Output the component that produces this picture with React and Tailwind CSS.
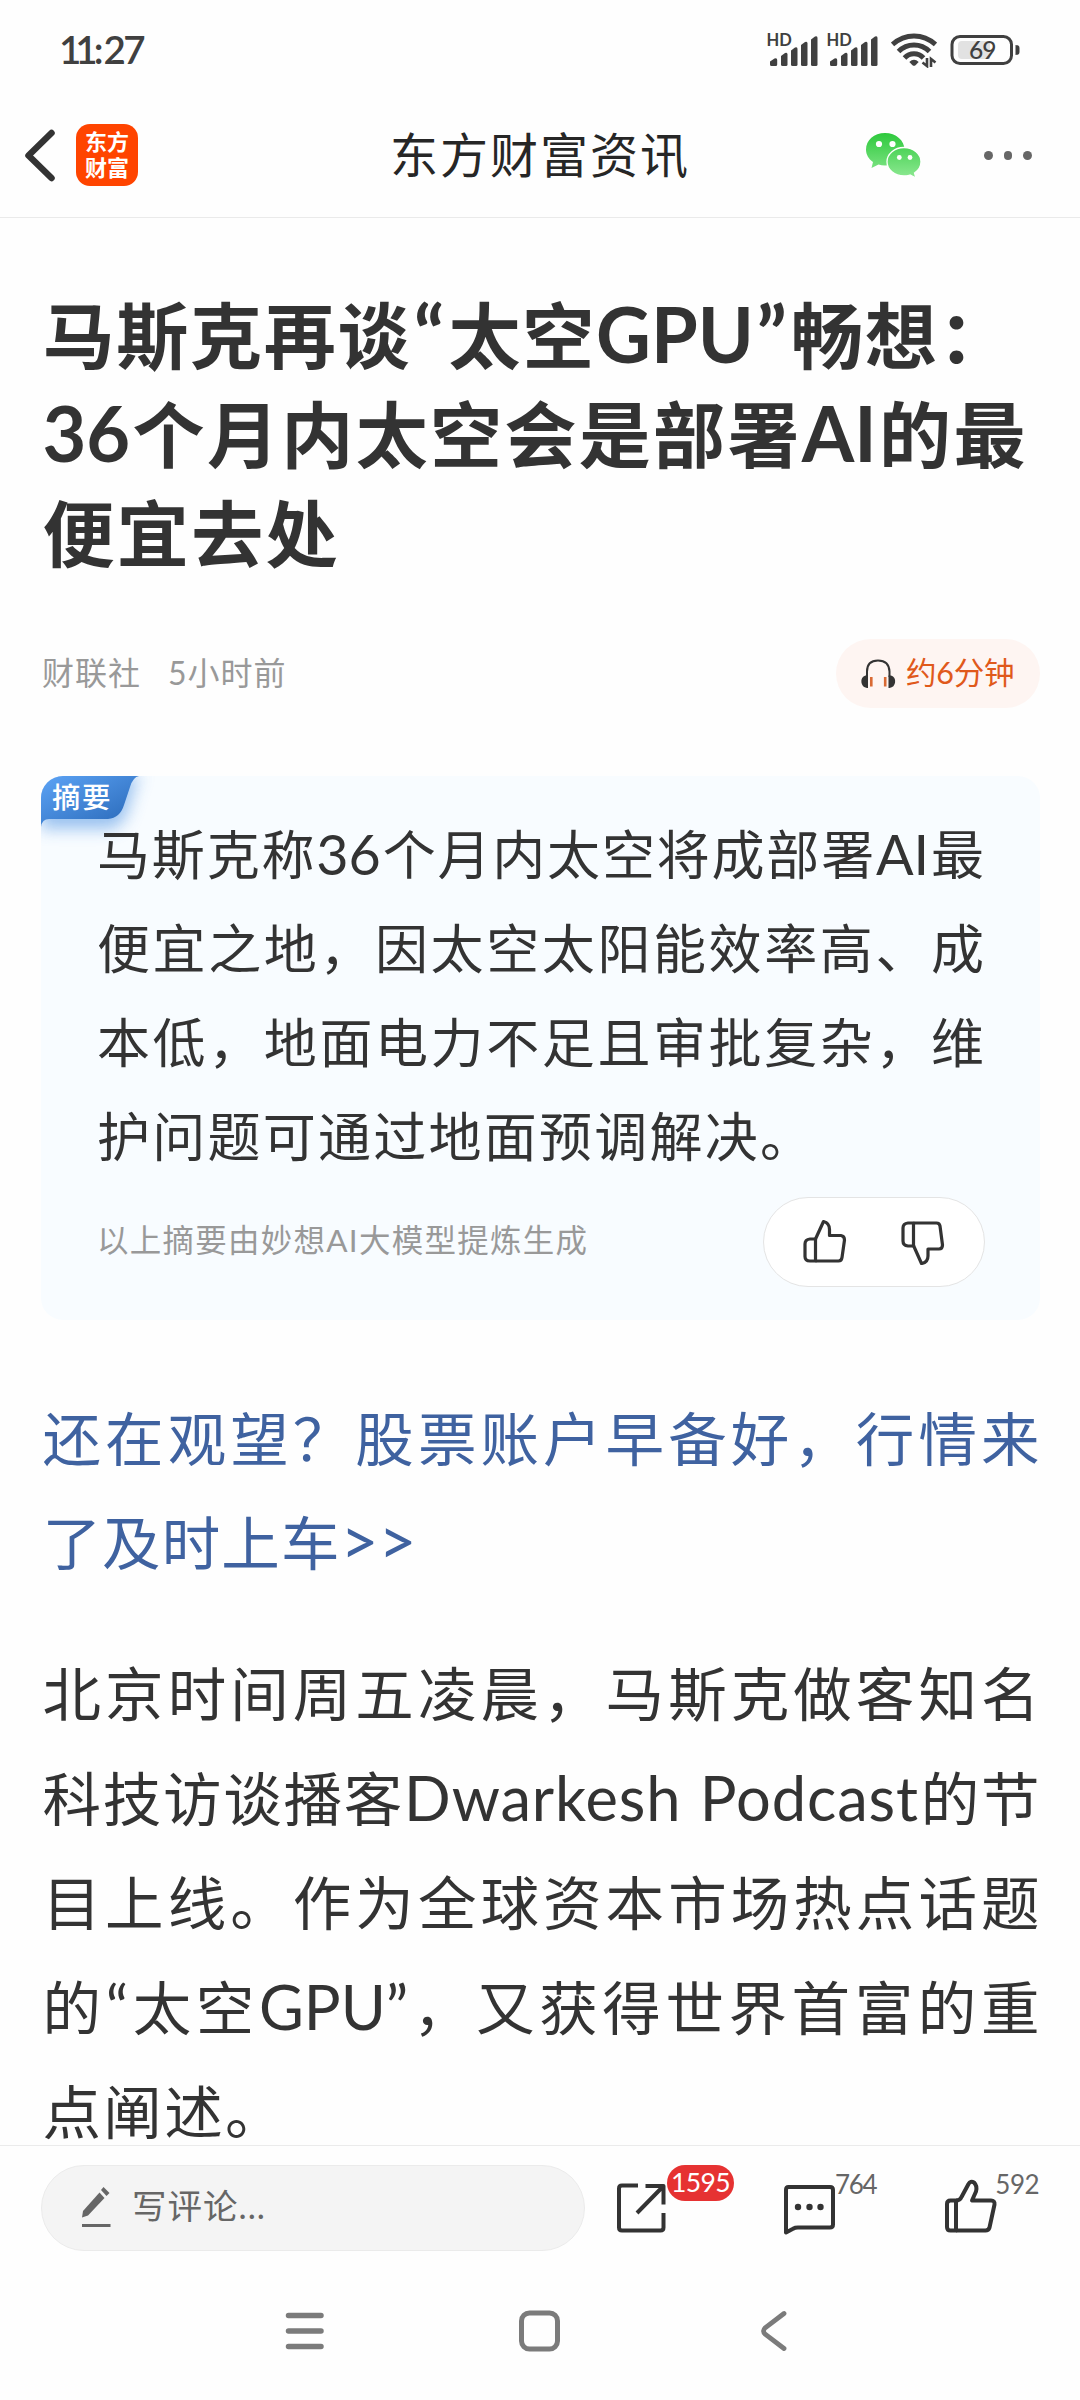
import clsx from "clsx";

const titleLines = [
  { parts: ["马斯克再谈", { quote: "“" }, "太空", { latin: "GPU" }, { quote: "”" }, "畅想："], width: "w-[968px]" },
  { parts: [{ latin: "36" }, "个月内太空会是部署", { latin: "AI" }, "的最"], width: "w-[983px]" },
  { parts: ["便宜去处"], width: "w-[295px]" },
];

const summaryLines = [
  { parts: ["马斯克称", { latin: "36" }, "个月内太空将成部署", { latin: "AI" }, "最"], width: "w-[887px]" },
  { parts: ["便宜之地，因太空太阳能效率高、成"], width: "w-[887px]" },
  { parts: ["本低，地面电力不足且审批复杂，维"], width: "w-[887px]" },
  { parts: ["护问题可通过地面预调解决。"], width: "w-[716px]" },
];

const adLines = [
  { parts: ["还在观望？股票账户早备好，行情来"], width: "w-[997px]" },
  { parts: ["了及时上车", { arrows: ">>" }], width: "w-[374px]" },
];

const bodyLines = [
  { parts: ["北京时间周五凌晨，马斯克做客知名"], width: "w-[997px]" },
  { parts: ["科技访谈播客", { wide: "Dwarkesh Podcast" }, "的节"], width: "w-[997px]" },
  { parts: ["目上线。作为全球资本市场热点话题"], width: "w-[997px]" },
  { parts: ["的", { latin: "“" }, "太空", { latin: "GPU" }, { latin: "”" }, "，又获得世界首富的重"], width: "w-[997px]" },
  { parts: ["点阐述。"], width: "w-[241px]" },
];

function Part({ part }) {
  if (part.latin) return <span className="text-[1.05em] leading-none">{part.latin}</span>;
  if (part.quote) return <span className="px-[0.03em] text-[1.1em] leading-none">{part.quote}</span>;
  if (part.wide) return <span className="text-[1.05em] leading-none tracking-[0.900px]">{part.wide}</span>;
  if (part.arrows) return <span className="text-[1.12em] leading-none">{part.arrows}</span>;
  return part;
}

function Lines({ lines, className }) {
  return lines.map((line, i) => (
    <div key={i} className={clsx("whitespace-nowrap text-justify [text-align-last:justify]", line.width, className)}>
      {line.parts.map((part, j) => (
        <Part key={j} part={part} />
      ))}
    </div>
  ));
}

function Signal() {
  return (
    <div className="relative h-[34px] w-[50px]">
      <svg width="50" height="34" viewBox="0 0 50 34" fill="#404040">
        <path d="M2 33V28.500L6.500 25.500Q9.200 24.500 9.200 27V31.500Q9.200 33 7.700 33H3.500Q2 33 2 31.500Z" />
        <path d="M13 23L17 20Q19.500 18.800 19.500 21.500V31.500Q19.500 33 18 33H14.500Q13 33 13 31.500Z" />
        <path d="M23 17.500L27 14.500Q29.500 13.300 29.500 16V31.500Q29.500 33 28 33H24.500Q23 33 23 31.500Z" />
        <path d="M33 12L37 9Q39.500 7.800 39.500 10.500V31.500Q39.500 33 38 33H34.500Q33 33 33 31.500Z" />
        <path d="M43 6.500L47 3.500Q49.500 2.300 49.500 5V31.500Q49.500 33 48 33H44.500Q43 33 43 31.500Z" />
      </svg>
      <span className="absolute -top-[3px] -left-[1.500px] text-[16.500px] leading-5 font-bold text-[#404040]">HD</span>
    </div>
  );
}

function Wifi() {
  return (
    <svg width="46" height="36" viewBox="0 0 46 36" fill="none" stroke="#404040" strokeWidth="5">
      <path d="M1.500 12.500Q11 4 23 4T44.500 12.500" />
      <path d="M7.500 19.500Q14 13 23 13T38.500 19.500" />
      <path d="M13.500 26Q17.500 21.800 23 21.800T32.500 26" />
      <path d="M18.300 30Q23 25.500 27.700 30L24.500 33.300Q23 34.300 21.500 33.300Z" fill="#404040" stroke="none" />
      <path d="M36 26V34L31.500 30.500M40 35V27L44.500 30.500" strokeWidth="2.600" />
    </svg>
  );
}

function Battery() {
  return (
    <svg width="70" height="32" viewBox="0 0 70 32">
      <rect x="2" y="2.500" width="59.500" height="27" rx="8" fill="none" stroke="#404040" strokeWidth="3" />
      <path d="M12 7H40V25H12Q8 25 8 21V11Q8 7 12 7Z" fill="#e2e2e2" />
      <path d="M65.500 11Q69.500 11 69.500 14V18Q69.500 21 65.500 21Z" fill="#404040" />
      <text x="19" y="25" fontSize="24.500" fontWeight="500" textLength="27.500" fill="#404040" fontFamily="Lato, sans-serif">69</text>
    </svg>
  );
}

function WeChat() {
  return (
    <svg width="58" height="48" viewBox="0 0 58 48">
      <defs>
        <linearGradient id="wechat" x1="0" y1="0" x2="0" y2="48" gradientUnits="userSpaceOnUse">
          <stop offset="0" stopColor="#2bc83a" />
          <stop offset="1" stopColor="#92ea96" />
        </linearGradient>
      </defs>
      <path d="M20 1C9 1 1 8.300 1 17.500C1 22.500 3.500 27 8 30L6.500 36L13.500 32.500Q16.500 33.500 20 33.500C31 33.500 39.500 26.500 39.500 17.500S31 1 20 1Z" fill="url(#wechat)" />
      <path d="M39 15.500C29.500 15.500 22 21.800 22 29.700S29.500 44 39 44Q42 44 45 43L51 46L49.500 41C53.500 38.300 56 34.300 56 29.700C56 21.800 48.500 15.500 39 15.500Z" fill="url(#wechat)" stroke="#fff" strokeWidth="1.300" />
      <g fill="#fff">
        <circle cx="14" cy="12" r="3.100" />
        <circle cx="27.500" cy="12" r="3.100" />
        <circle cx="34.300" cy="25.500" r="2.400" />
        <circle cx="45" cy="25.500" r="2.400" />
      </g>
    </svg>
  );
}

function Headphones() {
  return (
    <svg width="36" height="30" viewBox="0 0 36 30">
      <path d="M7 18V12.500Q7 1.500 18 1.500T29.500 12.500V18" fill="none" stroke="#333" strokeWidth="2" />
      <path d="M8 29H7A6.500 6.500 0 0 1 5.500 16.500H8ZM28.500 29H29.500A6.500 6.500 0 0 0 31 16.500H28.500Z" fill="#333" />
      <path d="M11.300 18V27.500M25.200 18V27.500" stroke="#d96a34" strokeWidth="2.600" />
    </svg>
  );
}

function SmallThumb({ down }) {
  return (
    <svg width="44" height="46" viewBox="0 0 44 46" fill="none" stroke="#333" strokeWidth="3.200" strokeLinejoin="round">
      {down ? (
        <>
          <path d="M12.500 4H35.500Q38.500 4 39 7L41.500 26Q41.500 30 38 30H27V37Q27 43.500 20.500 44.500L12.500 26.500" />
          <path d="M12.500 4H7Q2 4.500 2 9V22Q2 26.500 7 27H12.500Z" />
        </>
      ) : (
        <>
          <path d="M12.500 20L20.500 2.500Q26.500 4 26.500 10.500V16.500H38Q41.500 17 41.500 21L39 38.500Q38.500 42 35.500 42H12.500" />
          <path d="M12.500 20H7Q2 20.500 2 25V37.500Q2 42 7 42H12.500Z" />
        </>
      )}
    </svg>
  );
}

function StatusBar() {
  return (
    <div className="flex h-[100px] items-center justify-between pr-[60px] pl-[59px]">
      <div className="flex text-[38.500px] font-semibold text-[#404040]">
        <span className="tracking-[-6px]">11</span>
        <span className="ml-[2px]">:</span>
        <span className="tracking-[-2.500px]">27</span>
      </div>
      <div className="flex items-center">
        <Signal />
        <div className="w-2.5" />
        <Signal />
        <div className="w-[13px]" />
        <Wifi />
        <div className="w-[13px]" />
        <Battery />
      </div>
    </div>
  );
}

function Header() {
  return (
    <header className="flex h-[118px] items-start justify-between border-b border-[#eaeaea] pt-6">
      <div className="flex h-[62px] w-[388px] items-center pl-6">
        <svg width="32" height="54" viewBox="0 0 32 54" fill="none" stroke="#333" strokeWidth="6.500" strokeLinecap="round" strokeLinejoin="round">
          <path d="M27.500 5L4.500 27.500L27.500 50" />
        </svg>
        <div className="ml-5 flex h-[62px] w-[62px] flex-col items-center justify-center rounded-[14px] bg-[#ff4400] text-[22px] leading-[26px] font-bold text-white">
          <span>东方</span>
          <span>财富</span>
        </div>
      </div>
      <h1 className="text-[48px] leading-[62px] tracking-[2px] text-[#262626]">东方财富资讯</h1>
      <div className="flex h-[62px] w-[388px] items-center justify-end pt-px pr-[48px]">
        <WeChat />
        <div className="ml-[61px] flex gap-[11px]">
          <i className="h-[8.500px] w-[8.500px] rounded-full bg-[#666]" />
          <i className="h-[8.500px] w-[8.500px] rounded-full bg-[#666]" />
          <i className="h-[8.500px] w-[8.500px] rounded-full bg-[#666]" />
        </div>
      </div>
    </header>
  );
}

function Summary() {
  return (
    <section className="relative mt-[68px] h-[544px] rounded-[22px] bg-[#f8fcff] pt-[32px] pr-[55px] pl-14">
      <div className="absolute top-0 left-0 h-[80px] w-[136px] overflow-hidden rounded-tl-[22px]">
        <svg width="136" height="80" viewBox="0 0 136 80">
          <defs>
            <linearGradient id="tag" x1="0" y1="0" x2="1" y2="1">
              <stop offset="0" stopColor="#5ca3f5" />
              <stop offset="1" stopColor="#2766b5" />
            </linearGradient>
            <filter id="tagShadow" x="-30%" y="-30%" width="170%" height="200%">
              <feGaussianBlur stdDeviation="8" />
            </filter>
          </defs>
          <path d="M0 0H102Q96 2 93 12L87 34Q82 50 70 53H0Z" fill="#8fbbee" opacity="0.9" filter="url(#tagShadow)" />
          <path d="M0 0H98Q92 1 89 11L83 29Q79 42 67 43H8Q1 43 0 51Z" fill="url(#tag)" />
        </svg>
        <span className="absolute top-[3px] left-[11px] text-[28.500px] leading-[36px] font-medium tracking-[1.500px] text-white">摘要</span>
      </div>
      <div className="relative">
        <Lines lines={summaryLines} className="h-[94px] text-[53px] leading-[94px] text-[#333]" />
      </div>
      <div className="mt-[13px] flex h-[90px] items-center justify-between">
        <span className="pb-[3px] text-[31.500px] tracking-[1.250px] text-[#999]">以上摘要由妙想AI大模型提炼生成</span>
        <div className="flex h-[90px] w-[222px] items-center justify-between rounded-full border border-[#e4e4e4] bg-white px-[39px]">
          <SmallThumb />
          <SmallThumb down />
        </div>
      </div>
    </section>
  );
}

function CommentBar() {
  return (
    <footer className="flex h-[122px] items-start border-t border-[#ebebeb] pt-[19px] pl-[41px]">
      <div className="flex h-[86px] w-[544px] items-center rounded-full border border-[#ebebeb] bg-[#f4f4f4] pl-[39px] text-[#666]">
        <svg className="mb-0.5" width="30" height="42" viewBox="0 0 30 42" fill="#666">
          <path d="M18.500 6.500L23.500 12L7 29.500L1 31.500L2 25Z" />
          <path d="M20 4L22.500 1L28.500 7L25.500 10Z" />
          <path d="M1 38H29.500V41H1Z" />
        </svg>
        <span className="ml-[21px] pb-[5px] text-[34.500px] tracking-[1px]">写评论...</span>
      </div>
      <div className="ml-[31px] flex">
        <svg className="mt-4" width="52" height="54" viewBox="0 0 52 54" fill="none" stroke="#333" strokeWidth="4">
          <path d="M22 4.500H6Q3 4.500 3 7.500V46.500Q3 49.500 6 49.500H44.500Q47.500 49.500 47.500 46.500V32" />
          <path d="M29.500 5H47.500V23.500M47 5.500L21 32" strokeLinejoin="round" />
        </svg>
        <div className="-ml-px h-9 w-[67px] rounded-full bg-[#e63232] text-center text-[26.500px] leading-[34px] tracking-[-0.600px] text-white">1595</div>
      </div>
      <div className="ml-[48px] flex">
        <svg className="mt-[18px]" width="54" height="52" viewBox="0 0 54 52" fill="none" stroke="#333" strokeWidth="4" strokeLinejoin="round">
          <path d="M6.500 4H48Q51 4 51 7V41.500Q51 44.500 48 44.500H16Q13 44.500 11 45.700L4 49.500V7Q4 4 6.500 4Z" />
          <g fill="#333" stroke="none">
            <circle cx="16" cy="24" r="3.200" />
            <circle cx="27.500" cy="24" r="3.200" />
            <circle cx="38.500" cy="24" r="3.200" />
          </g>
        </svg>
        <span className="-ml-px mt-0.5 text-[26px] leading-[34px] tracking-[-1.300px] text-[#666]">764</span>
      </div>
      <div className="ml-[67px] flex">
        <svg className="mt-[14px]" width="54" height="56" viewBox="0 0 54 56" fill="none" stroke="#333" strokeWidth="4" strokeLinejoin="round">
          <path d="M13 21.500Q17 21.500 18.500 18L25.500 5Q27.500 1.500 31 3.500Q34.500 7 33 12.500L29 21.500H48Q52 21.500 51.500 25.500L46.500 48.500Q45.500 51.500 42.500 51.500H13" />
          <path d="M13 21.500H7.500Q4 21.500 4 25V48Q4 51.500 7.500 51.500H13Z" />
        </svg>
        <span className="-ml-0.5 mt-0.5 text-[26px] leading-[34px] tracking-[-0.500px] text-[#666]">592</span>
      </div>
    </footer>
  );
}

function NavBar() {
  return (
    <nav className="flex h-[133px] items-start justify-center gap-[193px] pt-[42px] pr-px">
      <svg width="42" height="44" viewBox="0 0 42 44" stroke="#7b7b7b" strokeWidth="5.500" strokeLinecap="round">
        <path d="M4.500 6.500H37M4.500 22H37M4.500 37.500H37" />
      </svg>
      <svg width="42" height="44" viewBox="0 0 42 44" fill="none" stroke="#7b7b7b" strokeWidth="5">
        <rect x="2.500" y="4" width="36" height="36" rx="8" />
      </svg>
      <svg width="42" height="44" viewBox="0 0 42 44" fill="none" stroke="#7b7b7b" strokeWidth="4.800" strokeLinecap="round">
        <path d="M30 4.500L11.500 18.500Q7.500 22 11.500 25.500L30 39.500" />
      </svg>
    </nav>
  );
}

function App() {
  return (
    <div lang="zh-CN" className="flex h-[2400px] w-[1080px] flex-col overflow-hidden bg-[#fefefe] font-['Lato','Noto_Sans_CJK_SC',sans-serif]">
      <StatusBar />
      <Header />
      <main className="h-[1927px] shrink-0 px-10 pt-[68px] pl-[41px]">
        <div className="pl-[1.500px]">
          <Lines lines={titleLines} className="h-[99px] text-[72px] leading-[99px] font-bold text-[#333]" />
        </div>
        <div className="mt-[56px] flex h-[69px] items-center justify-between">
          <div className="flex gap-[27px] pb-px pl-px text-[32px] tracking-[1px] text-[#999]">
            <span>财联社</span>
            <span>5小时前</span>
          </div>
          <div className="flex h-[69px] w-[204px] items-center rounded-full bg-[#fef5f2] pl-6 text-[#e0591b]">
            <Headphones />
            <span className="ml-2.5 pb-0.5 text-[30.500px] tracking-[-0.200px] whitespace-nowrap">约6分钟</span>
          </div>
        </div>
        <Summary />
        <div className="mt-[66px] pl-[1.500px]">
          <Lines lines={adLines} className="h-[104px] text-[58.500px] leading-[104px] text-[#3f62a0]" />
        </div>
        <div className="mt-[47px] pl-[1.500px]">
          <Lines lines={bodyLines} className="h-[104.500px] text-[58.500px] leading-[104px] text-[#333]" />
        </div>
      </main>
      <CommentBar />
      <NavBar />
    </div>
  );
}

export default App;
